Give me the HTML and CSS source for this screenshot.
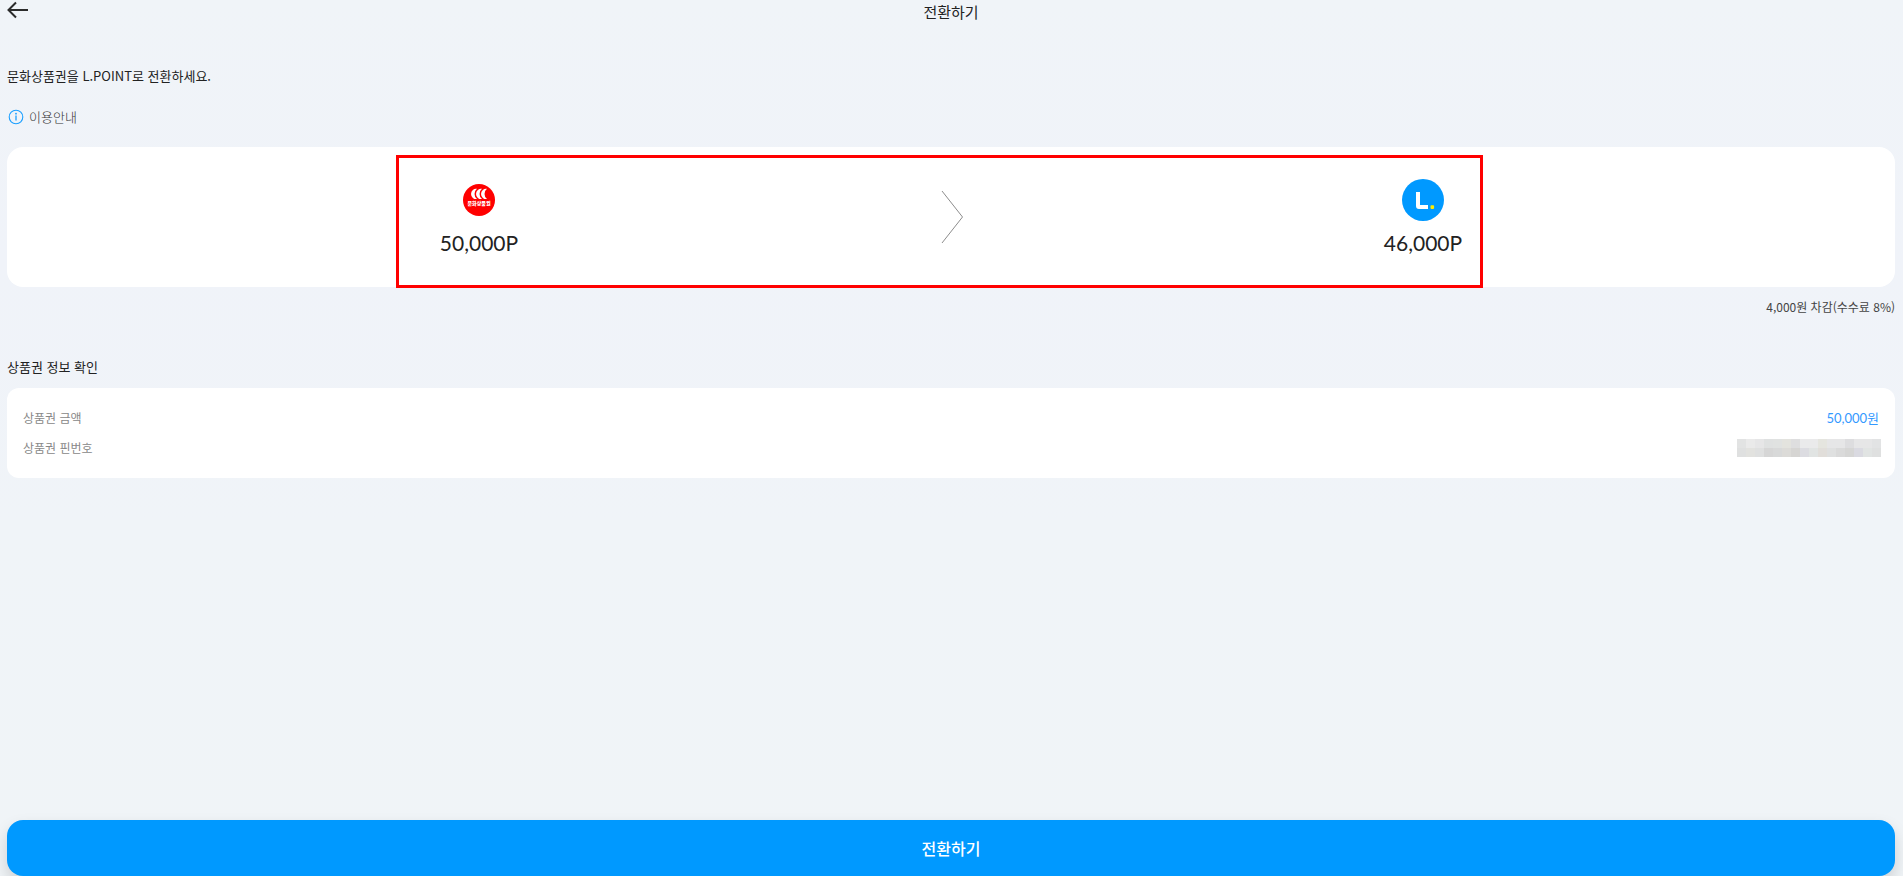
FILE: index.html
```html
<!DOCTYPE html>
<html lang="ko">
<head>
  <meta charset="UTF-8" />
  <meta name="viewport" content="width=device-width, initial-scale=1.0" />
  <title>전환하기</title>
  <link rel="stylesheet" href="styles.css">
</head>
<body>
  <header class="header">
    <button type="button" class="btn-back" aria-label="뒤로">
      <svg width="22" height="18" viewBox="0 0 22 18" fill="none" stroke="#2b2b2b" stroke-width="2">
        <path d="M9 1.5L1.5 9L9 16.5M1.5 9H21" />
      </svg>
    </button>
    <h1>전환하기</h1>
  </header>

  <main class="content">
    <p class="desc">문화상품권을 L.POINT로 전환하세요.</p>
    <a href="#" class="guide">
      <svg width="16" height="16" viewBox="0 0 16 16" fill="none">
        <circle cx="8" cy="8" r="6.8" stroke="#1a9fff" stroke-width="1.1" />
        <path d="M8 6.6V11.6" stroke="#1a9fff" stroke-width="1.3" />
        <circle cx="8" cy="4.7" r="0.9" fill="#1a9fff" />
      </svg>
      이용안내
    </a>

    <section class="exchange">
      <div class="point">
        <div class="point-icon">
          <svg width="32" height="32" viewBox="0 0 32 32">
            <circle cx="16" cy="16" r="16" fill="#ff0000" />
            <path d="M14 4.8A5 5.2 0 1 0 14 15A6.5 6.5 0 0 1 14 4.8Z" fill="#fff" />
            <path d="M19 4.8A5 5.2 0 1 0 19 15A6.5 6.5 0 0 1 19 4.8Z" fill="#fff" />
            <path d="M24 4.8A5 5.2 0 1 0 24 15A6.5 6.5 0 0 1 24 4.8Z" fill="#fff" />
            <text x="16" y="21" class="voucher-name">문화상품권</text>
          </svg>
        </div>
        <strong>50,000P</strong>
      </div>
      <svg class="chevron" width="24" height="54" viewBox="0 0 24 54" fill="none" stroke="#8c8c8c">
        <path d="M3 2L23.5 28L3 54" />
      </svg>
      <div class="point">
        <div class="point-icon">
          <svg width="42" height="42" viewBox="0 0 42 42">
            <circle cx="21" cy="21" r="21" fill="#0099ff" />
            <path d="M14 13H18V26H26V30H17Q14 30 14 27Z" fill="#fff" />
            <rect x="28.5" y="26.3" width="3.6" height="3.6" rx="0.8" fill="#ffeb00" />
          </svg>
        </div>
        <strong>46,000P</strong>
      </div>
      <div class="highlight"></div>
    </section>
    <p class="fee">4,000원 차감(수수료 8%)</p>

    <h2>상품권 정보 확인</h2>
    <dl class="info">
      <div class="info-row">
        <dt>상품권 금액</dt>
        <dd>50,000원</dd>
      </div>
      <div class="info-row">
        <dt>상품권 핀번호</dt>
        <dd class="pin">
          <svg width="144" height="18" viewBox="0 0 16 2" shape-rendering="crispEdges">
            <rect width="16" height="1" fill="#e6e6e7" />
            <rect y="1" width="16" height="1" fill="#dfe0e0" />
            <rect width="1" height="1" fill="#e2e3e3" />
            <rect x="1" width="1" height="1" fill="#eaeaea" />
            <rect x="3" width="1" height="1" fill="#dfe1e1" />
            <rect x="4" width="1" height="1" fill="#e0e2e1" />
            <rect x="5" width="1" height="1" fill="#e3e3de" />
            <rect x="6" width="1" height="1" fill="#dededf" />
            <rect x="7" width="2" height="1" fill="#eaeaeb" />
            <rect x="9" width="1" height="1" fill="#e5e5df" />
            <rect x="12" width="1" height="1" fill="#dddddf" />
            <rect x="15" width="1" height="1" fill="#e2e3e4" />
            <rect x="1" y="1" width="1" height="1" fill="#e2e2df" />
            <rect x="3" y="1" width="1" height="1" fill="#d6d6d6" />
            <rect x="4" y="1" width="1" height="1" fill="#d8d9d9" />
            <rect x="5" y="1" width="1" height="1" fill="#dcdbd8" />
            <rect x="6" y="1" width="1" height="1" fill="#d6d5d3" />
            <rect x="7" y="1" width="1" height="1" fill="#dcdce1" />
            <rect x="8" y="1" width="1" height="1" fill="#e1e4e3" />
            <rect x="9" y="1" width="1" height="1" fill="#e1deda" />
            <rect x="11" y="1" width="1" height="1" fill="#dadada" />
            <rect x="12" y="1" width="1" height="1" fill="#d6d6d5" />
            <rect x="13" y="1" width="1" height="1" fill="#dadae1" />
            <rect x="14" y="1" width="1" height="1" fill="#e1e4e3" />
          </svg>
        </dd>
      </div>
    </dl>
  </main>

  <button type="button" class="btn-submit">전환하기</button>
</body>
</html>
```

FILE: styles.css
```css
* {
  margin: 0;
  padding: 0;
  box-sizing: border-box;
}

body {
  font-family: "Noto Sans CJK KR", sans-serif;
  font-size: 13px;
  line-height: 20px;
  min-height: 100vh;
  padding: 0 8px 0 7px;
  background: linear-gradient(#f0f4f8, #f0f3f9 30%, #f0f4f8 60%, #f0f4f7);
  color: #222;
  display: flex;
  flex-direction: column;
}

button {
  font-family: inherit;
  border: none;
  cursor: pointer;
}

.header {
  display: grid;
  grid-template-columns: 1fr auto 1fr;
  height: 24px;
}

.btn-back {
  width: 22px;
  height: 20px;
  background: none;
}

.btn-back svg {
  display: block;
}

h1 {
  font-size: 15px;
  line-height: 24px;
  font-weight: 400;
}

.desc {
  margin-top: 42px;
}

.guide {
  display: flex;
  align-items: center;
  gap: 5px;
  width: fit-content;
  margin-top: 21px;
  padding-left: 1px;
  font-weight: 300;
  color: #333;
  text-decoration: none;
}

.exchange {
  position: relative;
  display: flex;
  align-items: center;
  height: 140px;
  margin-top: 20px;
  padding-bottom: 2px;
  background: #fff;
  border-radius: 16px;
}

.point {
  flex: 1;
  display: flex;
  flex-direction: column;
  align-items: center;
  gap: 12px;
}

.point-icon {
  display: flex;
  align-items: center;
  height: 42px;
}

.point strong {
  font-family: Lato, "Noto Sans CJK KR", sans-serif;
  font-size: 21px;
  line-height: 20px;
  font-weight: 400;
}

.voucher-name {
  font-size: 5px;
  font-weight: 900;
  text-anchor: middle;
  fill: #fff;
}

.chevron {
  margin: 0 -12px;
}

/* box around the two amounts, reaches a little below the card */
.highlight {
  position: absolute;
  top: 8px;
  right: 21.8%;
  bottom: -1px;
  left: 20.6%;
  border: 3px solid #ff0000;
}

.fee {
  margin-top: 10px;
  font-size: 12px;
  text-align: right;
  color: #444;
}

h2 {
  margin-top: 40px;
  font-size: 13px;
  font-weight: 400;
}

.info {
  display: flex;
  flex-direction: column;
  gap: 10px;
  margin-top: 11px;
  padding: 20px 16px;
  background: #fff;
  border-radius: 12px;
}

.info-row {
  display: flex;
  justify-content: space-between;
  align-items: center;
  height: 20px;
}

.info dt {
  font-size: 12px;
  color: #888;
}

.info dd {
  font-family: Lato, "Noto Sans CJK KR", sans-serif;
  font-size: 13px;
  color: #3399ff;
}

.info .pin {
  margin-right: -2px;
}

.pin svg {
  display: block;
}

.btn-submit {
  height: 56px;
  margin-top: auto;
  border-radius: 16px;
  background: #0099ff;
  box-shadow: 0 8px 16px rgba(0, 0, 0, 0.15);
  color: #fff;
  font-size: 16px;
  font-weight: 500;
}
```
